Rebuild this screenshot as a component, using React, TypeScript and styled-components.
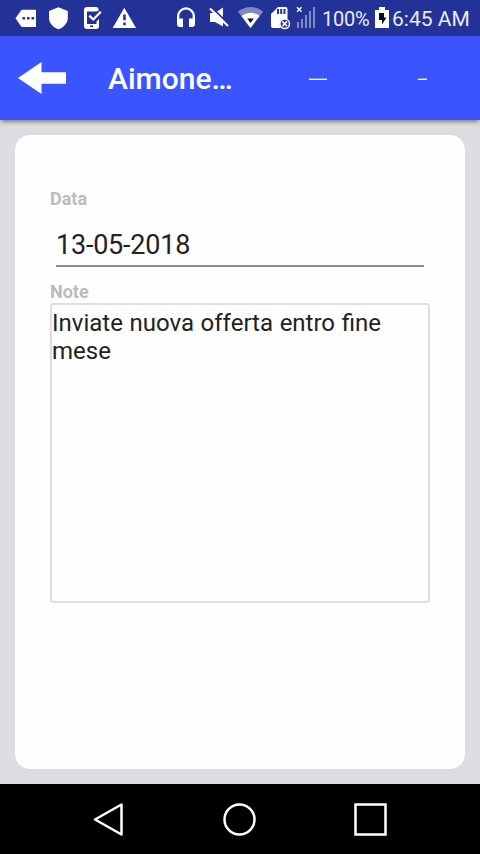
import React from "react";
import styled, { createGlobalStyle } from "styled-components";

const GlobalStyle = createGlobalStyle`
  * { box-sizing: border-box; }
  body { margin: 0; background: #dddce1; font-family: Roboto, sans-serif; }
  svg { display: block; flex: none; }
`;

const Screen = styled.div`
  width: 480px;
  height: 854px;
  display: flex;
  flex-direction: column;
  background: #dddce1;
  overflow: hidden;
`;

const StatusBar = styled.header`
  height: 36px;
  flex: none;
  display: flex;
  align-items: center;
  padding: 0 10px 0 14px;
  background: #233297;
  color: #fff;
`;

const StatusIcon = styled.svg<{ $gap?: number }>`
  height: 36px;
  margin-right: ${(p) => p.$gap ?? 0}px;
`;

const Spacer = styled.div`
  flex: 1;
`;

const Battery = styled.span`
  width: 53px;
  font-size: 20px;
  letter-spacing: -0.2px;
  line-height: 36px;
  padding-top: 2px;
  color: #e9ebf5;
  white-space: nowrap;
`;

const Clock = styled.time`
  width: 78px;
  font-size: 21px;
  line-height: 36px;
  padding-top: 2px;
  color: #e9ebf5;
  white-space: nowrap;
`;

const Toolbar = styled.div`
  height: 84px;
  flex: none;
  display: flex;
  align-items: center;
  padding-left: 18px;
  background: #3a54ff;
  box-shadow: 0 3px 4px -1px rgba(0, 0, 0, 0.42);
  color: #fff;
`;

const IconButton = styled.button`
  border: 0;
  padding: 0;
  background: none;
  display: flex;
`;

const Title = styled.h1`
  width: 154px;
  margin: 0 0 0 42px;
  padding-top: 1px;
  font-size: 30px;
  font-weight: 500;
  line-height: 36px;
  white-space: nowrap;
`;

const Action = styled.button<{ $width: number }>`
  width: 112px;
  height: 84px;
  flex: none;
  border: 0;
  padding: 0;
  background: none;
  display: flex;
  align-items: center;
  justify-content: center;

  & + & {
    width: 97px;
  }

  &::before {
    content: "";
    width: ${(p) => p.$width}px;
    height: 2px;
    margin-top: 2px;
    background: linear-gradient(#7f90ff 50%, #fff 50%);
  }
`;

const Content = styled.main`
  flex: 1;
  padding: 15px;
  display: flex;
`;

const Card = styled.form`
  flex: 1;
  display: flex;
  flex-direction: column;
  padding: 53px 35px 0;
  border-radius: 15px;
  background: #fefefe;
`;

const Label = styled.label`
  font-size: 18px;
  font-weight: 700;
  line-height: 21px;
  height: 21px;
  color: #bbb;
`;

const DateField = styled.div`
  height: 58px;
  margin: 0 6px 14px;
  padding-top: 20px;
  border-bottom: 2px solid #8c8c8c;
  font-size: 27px;
  letter-spacing: -0.22px;
  line-height: 32px;
  color: #222;
`;

const NoteField = styled.div`
  height: 300px;
  margin-top: 1px;
  padding: 4px 0 0;
  border: 2px solid #dedede;
  border-radius: 3px;
  font-size: 24px;
  word-spacing: 0.65px;
  line-height: 28px;
  color: #222;
`;

const NavBar = styled.nav`
  height: 70px;
  flex: none;
  display: flex;
  align-items: center;
  justify-content: center;
  gap: 95px;
  padding-right: 2px;
  background: #000;
`;

export default function App() {
  return (
    <>
      <GlobalStyle />
      <Screen>
        <StatusBar>
          <StatusIcon width="24" viewBox="14 0 24 36" $gap={8}>
            <path d="M15.5 18.3 21 10.4q.5-.6 1.3-.6H36V27H22.3q-.8 0-1.3-.7Z" fill="#fff" />
            <path d="M22.5 17h2.6v2.6h-2.6zM27 17h2.6v2.6H27zM31.5 17h2.6v2.6h-2.6z" fill="#233297" />
          </StatusIcon>
          <StatusIcon width="24" viewBox="46 0 24 36" $gap={10}>
            <path d="M58.4 7.200 67.800 11v7c0 5-4 9.600-9.400 11.200C53 27.600 49 23 49 18v-7Z" fill="#fff" />
          </StatusIcon>
          <StatusIcon width="24" viewBox="80 0 24 36" $gap={7}>
            <path d="M98.500 11V9.500Q98.500 7 96 7H87q-3 0-3 3v16q0 3 3 3h9q3 0 3-3v-7l-2.500 2.500v2.500H87V11.500h8Z" fill="#fff" />
            <path d="m89.300 15.700 4 3.800 7.500-7.700" fill="none" stroke="#fff" strokeWidth="2.300" />
            <path d="M90 25.500h3v1.500h-3z" fill="#233297" />
          </StatusIcon>
          <StatusIcon width="26" viewBox="111 0 26 36">
            <path d="M124.300 7.800 136 28h-23.300Z" fill="#fff" />
            <path d="M123.200 14.500h2.600v5.700h-2.600zM123.200 22.600h2.600v2.700h-2.600z" fill="#233297" />
          </StatusIcon>
          <Spacer />
          <StatusIcon width="22" viewBox="175 0 22 36" $gap={10}>
            <path d="M178.200 23v-7c0-4 3.500-7.600 7.800-7.600s7.800 3.600 7.800 7.600v7" fill="none" stroke="#fff" strokeWidth="2.300" />
            <path d="M177 18.500h6V27h-3q-3 0-3-3zM189 18.500h6V24q0 3-3 3h-3z" fill="#fff" />
          </StatusIcon>
          <StatusIcon width="23" viewBox="207 0 23 36" $gap={6}>
            <path d="M210 13h5l8-5.500v19l-8-4.500h-5Z" fill="#fff" />
            <path d="m211.300 7.200 18 17.500" stroke="#233297" strokeWidth="1.800" />
            <path d="m210 8.500 18 17.500" stroke="#fff" strokeWidth="2.200" />
          </StatusIcon>
          <StatusIcon width="29" viewBox="236 0 29 36" $gap={4}>
            <path d="M237.800 11.500Q250.500 2.500 263.200 11.500L250.500 28Z" fill="#7f88c2" />
            <path d="M241.500 16Q250.500 9.300 259.500 16L250.500 28Z" fill="#fff" />
            <path d="M247.200 18.500h6.600l-3.300 4.500Z" fill="#090d26" />
          </StatusIcon>
          <StatusIcon width="24" viewBox="269 0 24 36" $gap={2}>
            <path d="M278 7h7.500q2 0 2 2v10q-7-.500-8 5 0 2 1.200 4H273q-2 0-2-2V14Z" fill="#fff" />
            <path d="M277 9h2v5h-2zM280.200 9h2v5h-2zM283.500 9h2v5h-2z" fill="#233297" />
            <circle cx="284.700" cy="23.800" r="4.800" fill="#233297" stroke="#fff" strokeWidth="1.500" />
            <path d="m282.300 21.400 4.800 4.800m0-4.800-4.800 4.800" stroke="#fff" strokeWidth="1.600" />
          </StatusIcon>
          <StatusIcon width="21" viewBox="295 0 21 36" $gap={6}>
            <path d="M298 22v6M302 19v9M306 15v13M310 11v17M314 7v21" stroke="#7f88c2" strokeWidth="2" />
            <path d="m297 7.300 4.500 4.500m0-4.500L297 11.800" stroke="#fff" strokeWidth="1.400" />
          </StatusIcon>
          <Battery>100%</Battery>
          <StatusIcon width="14" viewBox="375 0 14 36" $gap={3}>
            <path d="M379 7h6v3h4v18h-14V10h4Z" fill="#fff" />
            <path d="M379 13h5v4.500h2.500L382 24.500V20h-3Z" fill="#090d26" />
          </StatusIcon>
          <Clock>6:45 AM</Clock>
        </StatusBar>
        <Toolbar>
          <IconButton type="button" aria-label="Indietro">
            <svg width="48" height="32" viewBox="0 0 48 32">
              <path d="M0 16 23.500 0v10.300H48v11.400H23.500V32Z" fill="#fff" />
            </svg>
          </IconButton>
          <Title>Aimone…</Title>
          <Action type="button" $width={18} />
          <Action type="button" $width={9} />
        </Toolbar>
        <Content>
          <Card>
            <Label>Data</Label>
            <DateField>13-05-2018</DateField>
            <Label>Note</Label>
            <NoteField>Inviate nuova offerta entro fine mese</NoteField>
          </Card>
        </Content>
        <NavBar>
          <svg width="36" height="36" viewBox="0 0 36 36">
            <path d="M5 18 31.500 3v30Z" transform="translate(0 .5)" fill="none" stroke="#fff" strokeWidth="2.500" strokeLinejoin="round" />
          </svg>
          <svg width="36" height="36" viewBox="0 0 36 36">
            <circle cx="18.500" cy="18.500" r="15" fill="none" stroke="#fff" strokeWidth="2.500" />
          </svg>
          <svg width="36" height="36" viewBox="0 0 36 36">
            <path d="M3.500 3.500h30v30h-30z" fill="none" stroke="#fff" strokeWidth="2.500" />
          </svg>
        </NavBar>
      </Screen>
    </>
  );
}
